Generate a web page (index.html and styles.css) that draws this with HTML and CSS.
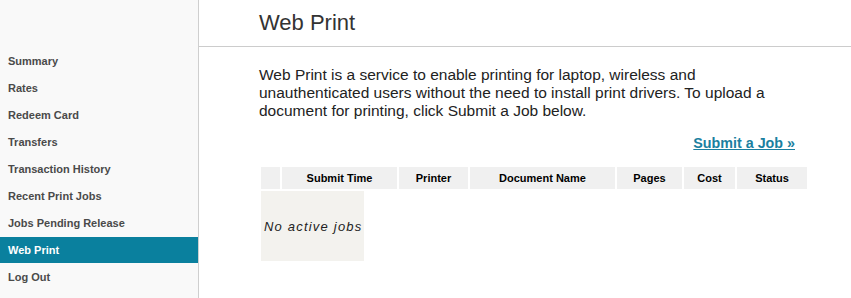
FILE: index.html
```html
<!DOCTYPE html>
<html lang="en">
<head>
    <meta charset="UTF-8">
    <meta name="viewport" content="width=device-width, initial-scale=1.0">
    <title>Web Print</title>
    <link rel="stylesheet" href="styles.css">
</head>
<body>
    <div class="sidebar">
        <ul class="nav">
            <li><a href="#">Summary</a></li>
            <li><a href="#">Rates</a></li>
            <li><a href="#">Redeem Card</a></li>
            <li><a href="#">Transfers</a></li>
            <li><a href="#">Transaction History</a></li>
            <li><a href="#">Recent Print Jobs</a></li>
            <li><a href="#">Jobs Pending Release</a></li>
            <li class="current"><a href="#">Web Print</a></li>
            <li><a href="#">Log Out</a></li>
        </ul>
    </div>

    <div class="main">
        <div class="title-bar">
            <h1>Web Print</h1>
        </div>
        <div class="content">
            <p class="intro">Web Print is a service to enable printing for laptop, wireless and unauthenticated users without the need to install print drivers. To upload a document for printing, click Submit a Job below.</p>
            <div class="actions">
                <a href="#" class="submit-link">Submit a Job &raquo;</a>
            </div>
            <table class="jobs">
                <thead>
                    <tr>
                        <th class="col-check"></th>
                        <th class="col-time">Submit Time</th>
                        <th class="col-printer">Printer</th>
                        <th class="col-doc">Document Name</th>
                        <th class="col-pages">Pages</th>
                        <th class="col-cost">Cost</th>
                        <th class="col-status">Status</th>
                    </tr>
                </thead>
                <tbody>
                    <tr>
                        <td colspan="7" class="empty-row">
                            <div class="empty">No active jobs</div>
                        </td>
                    </tr>
                </tbody>
            </table>
        </div>
    </div>
</body>
</html>
```

FILE: styles.css
```css
body {
    margin: 0;
    display: flex;
    min-height: 100vh;
    font-family: "Liberation Sans", Arial, sans-serif;
    background-color: #fff;
    color: #222;
}
.sidebar {
    width: 198px;
    flex-shrink: 0;
    background-color: #f9f9f9;
    border-right: 1px solid #cfcfcf;
}
.nav {
    list-style: none;
    margin: 0;
    padding: 48px 0 0 0;
}
.nav li a {
    display: block;
    height: 27px;
    line-height: 27px;
    padding-left: 8px;
    font-size: 11px;
    font-weight: bold;
    color: #4a4a4a;
    text-decoration: none;
}
.nav li.current a {
    height: 26px;
    line-height: 26px;
    margin-bottom: 1px;
    background-color: #0a809e;
    color: #fff;
}
.main {
    flex: 1;
}
.title-bar {
    height: 46px;
    padding-left: 60px;
    border-bottom: 1px solid #cccccc;
}
h1 {
    margin: 0;
    font-size: 22px;
    font-weight: normal;
    line-height: 46px;
    color: #333;
}
.content {
    padding-left: 60px;
    width: 550px;
}
.intro {
    margin: 19px 0 0 0;
    max-width: 535px;
    font-size: 15.5px;
    line-height: 18px;
    color: #222;
}
.actions {
    margin-top: 14px;
    padding-right: 14px;
    text-align: right;
}
.submit-link {
    font-size: 14.3px;
    font-weight: bold;
    line-height: 18px;
    color: #1a7fa0;
    text-decoration: underline;
}
.jobs {
    margin-top: 13px;
    border-spacing: 2px;
    border-collapse: separate;
}
.jobs th {
    height: 22px;
    padding: 0;
    background-color: #f0f0f0;
    font-size: 11px;
    font-weight: bold;
    color: #000;
    text-align: center;
}
.col-check { width: 19px; }
.col-time { width: 115px; }
.col-printer { width: 69px; }
.col-doc { width: 145px; }
.col-pages { width: 65px; }
.col-cost { width: 51px; }
.col-status { width: 70px; }
.empty-row {
    padding: 0;
}
.empty {
    width: fit-content;
    padding: 27px 2px 25px 3px;
    background-color: #f3f2ee;
    font-size: 13px;
    font-style: italic;
    letter-spacing: 1.2px;
    line-height: 18px;
    color: #222;
}
```
